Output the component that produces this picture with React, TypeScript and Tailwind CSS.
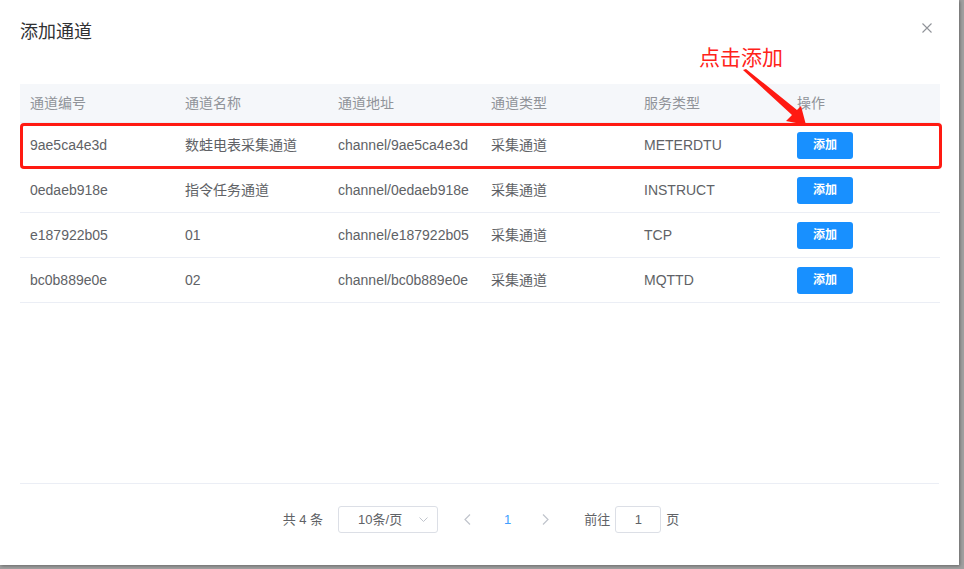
import React from 'react'

interface Channel { code: string; name: string; addr: string; type: string; service: string }

const rows: Channel[] = [
  { code: '9ae5ca4e3d', name: '数蛙电表采集通道', addr: 'channel/9ae5ca4e3d', type: '采集通道', service: 'METERDTU' },
  { code: '0edaeb918e', name: '指令任务通道', addr: 'channel/0edaeb918e', type: '采集通道', service: 'INSTRUCT' },
  { code: 'e187922b05', name: '01', addr: 'channel/e187922b05', type: '采集通道', service: 'TCP' },
  { code: 'bc0b889e0e', name: '02', addr: 'channel/bc0b889e0e', type: '采集通道', service: 'MQTTD' },
]

const cols = 'grid grid-cols-[155px_153px_153px_153px_153px_153px]'

export default function App() {
  return (
    <div
      className="w-[964px] h-[569px] bg-[#a0a0a0] overflow-hidden relative"
      style={{ fontFamily: '"Liberation Sans", "Noto Sans CJK SC", sans-serif' }}
    >
      <div className="w-[959px] h-[565px] bg-white flex flex-col shadow-[1px_1px_3px_rgba(0,0,0,0.35)]">
        {/* Header */}
        <div className="flex items-center justify-between pl-5 pr-[27px] pt-5 pb-[10px]">
          <span className="text-[18px] leading-6 text-[#303133]">添加通道</span>
          <svg width="10" height="10" viewBox="0 0 10 10" className="mt-[-8px]">
            <path d="M0.5 0.5 L9.5 9.5 M9.5 0.5 L0.5 9.5" stroke="#909399" strokeWidth="1.1" />
          </svg>
        </div>

        {/* Table */}
        <div className="flex-1 px-5 pt-[30px]">
          <div className="w-[920px] text-[14px]">
            <div className={`${cols} h-[39px] items-center bg-[#f5f7fa] text-[#909399] border-b border-[#ebeef5]`}>
              {['通道编号', '通道名称', '通道地址', '通道类型', '服务类型', '操作'].map((h) => (
                <div key={h} className="pl-[10px]">{h}</div>
              ))}
            </div>
            {rows.map((r) => (
              <div key={r.code} className={`${cols} h-[45px] items-center text-[#606266] border-b border-[#ebeef5]`}>
                <div className="pl-[10px]">{r.code}</div>
                <div className="pl-[10px]">{r.name}</div>
                <div className="pl-[10px]">{r.addr}</div>
                <div className="pl-[10px]">{r.type}</div>
                <div className="pl-[10px]">{r.service}</div>
                <div className="pl-[10px]">
                  <button className="w-[56px] h-[27px] rounded-[3px] bg-[#1890ff] text-white text-[12px] font-semibold">
                    添加
                  </button>
                </div>
              </div>
            ))}
          </div>
        </div>

        {/* Pagination */}
        <div className="mx-5 border-t border-[#ebeef5] h-[82px] flex items-start justify-center pt-[22px]">
          <div className="flex items-center h-[27px] text-[13px] text-[#606266] ml-[3px]">
            <span className="mr-[15px]">共 4 条</span>
            <div className="w-[100px] h-[27px] border border-[#dcdfe6] rounded-[3px] flex items-center justify-between pl-[19px] pr-[9px]">
              <span>10条/页</span>
              <svg width="9" height="6" viewBox="0 0 9 6">
                <path d="M0.5 0.5 L4.5 4.5 L8.5 0.5" fill="none" stroke="#c0c4cc" strokeWidth="1" />
              </svg>
            </div>
            <svg width="7" height="11" viewBox="0 0 7 11" className="ml-[26px]">
              <path d="M6 0.5 L1 5.5 L6 10.5" fill="none" stroke="#c0c4cc" strokeWidth="1.2" />
            </svg>
            <span className="ml-[33px] text-[#409eff]">1</span>
            <svg width="7" height="11" viewBox="0 0 7 11" className="ml-[31px]">
              <path d="M1 0.5 L6 5.5 L1 10.5" fill="none" stroke="#c0c4cc" strokeWidth="1.2" />
            </svg>
            <span className="ml-[35px]">前往</span>
            <div className="ml-[5px] w-[46px] h-[27px] border border-[#dcdfe6] rounded-[3px] flex items-center justify-center">1</div>
            <span className="ml-[5px]">页</span>
          </div>
        </div>
      </div>

      {/* Annotation overlay */}
      <div className="absolute left-[20px] top-[123px] w-[922px] h-[46px] border-[3px] border-[#ff1a12] rounded-[4px] pointer-events-none" />
      <div className="absolute left-[699px] top-[44px] text-[21px] leading-[28px] text-[#ff2219]">点击添加</div>
      <svg className="absolute left-0 top-0 pointer-events-none" width="964" height="569">
        <polygon points="743,70 746,69 797,110 801,106 806,125 786,121 792,115" fill="#ff1a12" />
      </svg>
    </div>
  )
}
